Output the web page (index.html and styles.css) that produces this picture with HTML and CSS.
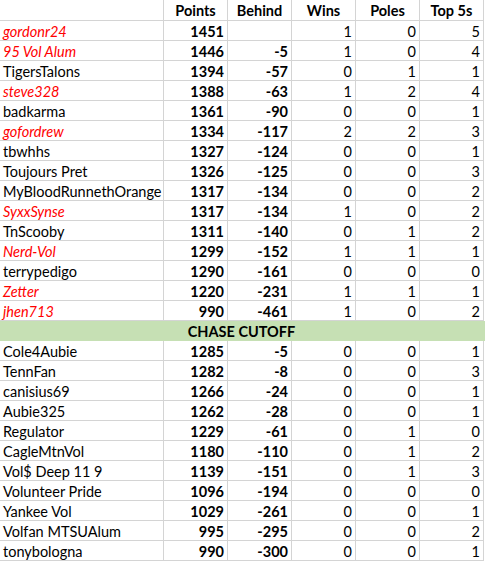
FILE: index.html
```html
<!DOCTYPE html>
<html>
<head>
<meta charset="utf-8">
<link rel="stylesheet" href="styles.css">
</head>
<body>
<div class="sheet">
  <div class="row head">
    <div class="c name"></div><div class="c">Points</div><div class="c">Behind</div><div class="c">Wins</div><div class="c">Poles</div><div class="c">Top 5s</div>
  </div>
  <div class="row"><div class="c name red">gordonr24</div><div class="c b">1451</div><div class="c b"></div><div class="c">1</div><div class="c">0</div><div class="c">5</div></div>
  <div class="row"><div class="c name red">95 Vol Alum</div><div class="c b">1446</div><div class="c b">-5</div><div class="c">1</div><div class="c">0</div><div class="c">4</div></div>
  <div class="row"><div class="c name">TigersTalons</div><div class="c b">1394</div><div class="c b">-57</div><div class="c">0</div><div class="c">1</div><div class="c">1</div></div>
  <div class="row"><div class="c name red">steve328</div><div class="c b">1388</div><div class="c b">-63</div><div class="c">1</div><div class="c">2</div><div class="c">4</div></div>
  <div class="row"><div class="c name">badkarma</div><div class="c b">1361</div><div class="c b">-90</div><div class="c">0</div><div class="c">0</div><div class="c">1</div></div>
  <div class="row"><div class="c name red">gofordrew</div><div class="c b">1334</div><div class="c b">-117</div><div class="c">2</div><div class="c">2</div><div class="c">3</div></div>
  <div class="row"><div class="c name">tbwhhs</div><div class="c b">1327</div><div class="c b">-124</div><div class="c">0</div><div class="c">0</div><div class="c">1</div></div>
  <div class="row"><div class="c name">Toujours Pret</div><div class="c b">1326</div><div class="c b">-125</div><div class="c">0</div><div class="c">0</div><div class="c">3</div></div>
  <div class="row"><div class="c name">MyBloodRunnethOrange</div><div class="c b">1317</div><div class="c b">-134</div><div class="c">0</div><div class="c">0</div><div class="c">2</div></div>
  <div class="row"><div class="c name red">SyxxSynse</div><div class="c b">1317</div><div class="c b">-134</div><div class="c">1</div><div class="c">0</div><div class="c">2</div></div>
  <div class="row"><div class="c name">TnScooby</div><div class="c b">1311</div><div class="c b">-140</div><div class="c">0</div><div class="c">1</div><div class="c">2</div></div>
  <div class="row"><div class="c name red">Nerd-Vol</div><div class="c b">1299</div><div class="c b">-152</div><div class="c">1</div><div class="c">1</div><div class="c">1</div></div>
  <div class="row"><div class="c name">terrypedigo</div><div class="c b">1290</div><div class="c b">-161</div><div class="c">0</div><div class="c">0</div><div class="c">0</div></div>
  <div class="row"><div class="c name red">Zetter</div><div class="c b">1220</div><div class="c b">-231</div><div class="c">1</div><div class="c">1</div><div class="c">1</div></div>
  <div class="row"><div class="c name red">jhen713</div><div class="c b">990</div><div class="c b">-461</div><div class="c">1</div><div class="c">0</div><div class="c">2</div></div>
  <div class="chase">CHASE CUTOFF</div>
  <div class="row"><div class="c name">Cole4Aubie</div><div class="c b">1285</div><div class="c b">-5</div><div class="c">0</div><div class="c">0</div><div class="c">1</div></div>
  <div class="row"><div class="c name">TennFan</div><div class="c b">1282</div><div class="c b">-8</div><div class="c">0</div><div class="c">0</div><div class="c">3</div></div>
  <div class="row"><div class="c name">canisius69</div><div class="c b">1266</div><div class="c b">-24</div><div class="c">0</div><div class="c">0</div><div class="c">1</div></div>
  <div class="row"><div class="c name">Aubie325</div><div class="c b">1262</div><div class="c b">-28</div><div class="c">0</div><div class="c">0</div><div class="c">1</div></div>
  <div class="row"><div class="c name">Regulator</div><div class="c b">1229</div><div class="c b">-61</div><div class="c">0</div><div class="c">1</div><div class="c">0</div></div>
  <div class="row"><div class="c name">CagleMtnVol</div><div class="c b">1180</div><div class="c b">-110</div><div class="c">0</div><div class="c">1</div><div class="c">2</div></div>
  <div class="row"><div class="c name">Vol$ Deep 11 9</div><div class="c b">1139</div><div class="c b">-151</div><div class="c">0</div><div class="c">1</div><div class="c">3</div></div>
  <div class="row"><div class="c name">Volunteer Pride</div><div class="c b">1096</div><div class="c b">-194</div><div class="c">0</div><div class="c">0</div><div class="c">0</div></div>
  <div class="row"><div class="c name">Yankee Vol</div><div class="c b">1029</div><div class="c b">-261</div><div class="c">0</div><div class="c">0</div><div class="c">1</div></div>
  <div class="row"><div class="c name">Volfan MTSUAlum</div><div class="c b">995</div><div class="c b">-295</div><div class="c">0</div><div class="c">0</div><div class="c">2</div></div>
  <div class="row"><div class="c name">tonybologna</div><div class="c b">990</div><div class="c b">-300</div><div class="c">0</div><div class="c">0</div><div class="c">1</div></div>
  <div class="foot"></div>
</div>
</body>
</html>
```
FILE: styles.css
```css
html, body {
  margin: 0;
  padding: 0;
  background: #ffffff;
}
.sheet {
  width: 485px;
  font-family: Lato, "Open Sans", sans-serif;
  font-size: 14.5px;
  color: #000000;
}
.row {
  display: grid;
  grid-template-columns: 164px repeat(5, 64px);
  grid-template-rows: 20px;
  height: 20px;
}
.row.head {
  grid-template-rows: 21px;
  height: 21px;
}
.c {
  box-sizing: border-box;
  border-right: 1px solid #d4d4d4;
  border-bottom: 1px solid #d4d4d4;
  padding: 1px 3px 0 3px;
  text-align: right;
  line-height: 19px;
  white-space: nowrap;
  overflow: hidden;
}
.head .c {
  text-align: center;
  font-weight: bold;
  line-height: 20px;
}
.name {
  text-align: left;
}
.red {
  color: #ff0000;
  font-style: italic;
}
.b {
  font-weight: bold;
}
.chase {
  height: 20px;
  width: 485px;
  background: #c6e0b4;
  text-align: center;
  font-weight: bold;
  line-height: 20px;
  padding: 1px 2px 0 0;
  box-sizing: border-box;
  overflow: hidden;
}
.foot {
  height: 2px;
  border-bottom: 1px solid #a6a6a6;
}
```
